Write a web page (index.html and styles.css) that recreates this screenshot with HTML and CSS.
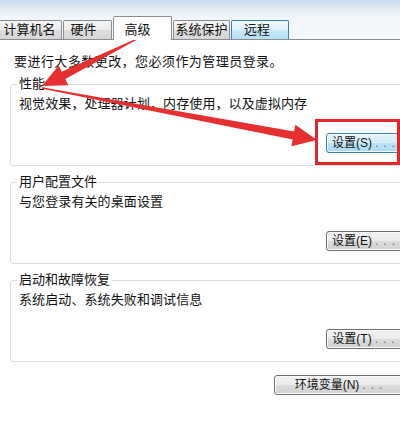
FILE: index.html
```html
<!DOCTYPE html>
<html lang="zh-CN">
<head>
  <meta charset="UTF-8" />
  <meta name="viewport" content="width=device-width, initial-scale=1.0"/>
  <title>系统属性 - 高级</title>
  <link rel="stylesheet" href="styles.css">
</head>
<body>
  <div class="dialog">
    <!-- Tabs -->
    <div class="tabbar">
      <div class="tab tab-name">计算机名</div>
      <div class="tab tab-hw">硬件</div>
      <div class="tab tab-adv active">高级</div>
      <div class="tab tab-sys">系统保护</div>
      <div class="tab tab-remote hover">远程</div>
    </div>

    <!-- Advanced page -->
    <div class="panel">
      <p class="note">要进行大多数更改，您必须作为管理员登录。</p>

      <div class="group">
        <div class="group-title">性能</div>
        <p class="group-desc">视觉效果，处理器计划，内存使用，以及虚拟内存</p>
        <button class="btn focus">设置(S)<span class="dots">...</span></button>
      </div>

      <div class="group">
        <div class="group-title">用户配置文件</div>
        <p class="group-desc">与您登录有关的桌面设置</p>
        <button class="btn">设置(E)<span class="dots">...</span></button>
      </div>

      <div class="group">
        <div class="group-title">启动和故障恢复</div>
        <p class="group-desc">系统启动、系统失败和调试信息</p>
        <button class="btn">设置(T)<span class="dots">...</span></button>
      </div>

      <button class="btn btn-env">环境变量(N)<span class="dots">...</span></button>
    </div>

    <!-- Annotation drawn over the screenshot -->
    <svg class="marks" width="400" height="422" viewBox="0 0 400 422">
      <polygon fill="#e5302f" points="136.7,38.4 61.7,71.8 58.6,65.6 42,86 68.4,85.2 65.3,79 137.3,39.6"/>
      <polygon fill="#e5302f" points="42,87.3 294.1,131.6 295.4,124.7 317,140 291.4,146.3 292.7,139.4 42,88.7"/>
      <rect x="316.5" y="120.5" width="82" height="43" fill="none" stroke="#e0282c" stroke-width="3"/>
    </svg>
  </div>
</body>
</html>
```

FILE: styles.css
```css
* {
  margin: 0; padding: 0; box-sizing: border-box;
}

html, body {
  width: 400px;
  height: 422px;
  overflow: hidden;
}

body {
  font-family: "Liberation Sans", "Noto Sans CJK SC", sans-serif;
  font-size: 13px;
  color: #111;
  background: #fff;
}

.dialog {
  position: relative;
  width: 420px;
  height: 422px;
  background: #fff;
}

/* tabs */
.tabbar {
  display: flex;
  align-items: flex-end;
  height: 39px;
  margin-left: -3px;
  background: linear-gradient(#c9dbee 0, #e2ebf5 8px, #f3f6fa 18px, #f7f8fa 39px);
}

.tab {
  height: 19px;
  margin-right: 1px;
  line-height: 17px;
  text-align: center;
  white-space: nowrap;
  border: 1px solid #898c95;
  border-bottom: none;
  border-radius: 2px 2px 0 0;
  background: linear-gradient(#f5f5f5, #ececec 50%, #dedede 50%, #d6d6d6);
}

.tab-name { width: 65px; }
.tab-hw { width: 49px; padding-right: 8px; }
.tab-adv { width: 59px; padding-right: 10px; }
.tab-sys { width: 57px; }
.tab-remote { width: 58px; padding-right: 6px; }

.tab.active {
  position: relative;
  z-index: 1;
  height: 24px;
  margin-bottom: -1px;
  padding-top: 2px;
  line-height: 22px;
  background: #fff;
}

.tab.hover {
  border-color: #3c7fb1;
  background: linear-gradient(#eef8fe, #dff2fc 50%, #c8e9fb 50%, #b6e0f7);
}

/* page */
.panel {
  border-top: 1px solid #898c95;
  padding: 0 4px 0 10px;
}

.note {
  margin-top: 15px;
  padding-left: 4px;
  line-height: 14px;
  letter-spacing: 0.45px;
}

.group {
  margin-top: 15px;
  padding: 0 9px 12px 8px;
  border: 1px solid #dadfe3;
  border-radius: 3px;
}

.group + .group {
  margin-top: 16px;
}

.group-title {
  width: fit-content;
  margin: -9px 0 0 -2px;
  padding: 0 2px;
  line-height: 16px;
  background: #fff;
}

.group-desc {
  margin-top: 4px;
  line-height: 16px;
  letter-spacing: 0.1px;
}

/* buttons */
.btn {
  display: block;
  width: 80px;
  height: 20px;
  margin: 21px 0 0 auto;
  font-family: inherit;
  font-size: 12px;
  line-height: 18px;
  color: #111;
  text-align: center;
  white-space: nowrap;
  border: 1px solid #707070;
  border-radius: 3px;
  background: linear-gradient(#f2f2f2, #ebebeb 50%, #dddddd 50%, #cfcfcf);
  box-shadow: inset 0 0 0 1px #fcfcfc;
}

.btn.focus {
  border-color: #3c7fb1;
  background: linear-gradient(#e5f4fc, #d4eefb 50%, #bde4f8 50%, #a9daf5);
  box-shadow: inset 0 0 0 1px #f4fbff;
}

.btn-env {
  width: 134px;
  margin: 13px 8px 0 auto;
}

.dots {
  margin-left: 3px;
  letter-spacing: 5px;
  color: #666;
}

.marks {
  position: absolute;
  top: 0;
  left: 0;
  pointer-events: none;
}
```
